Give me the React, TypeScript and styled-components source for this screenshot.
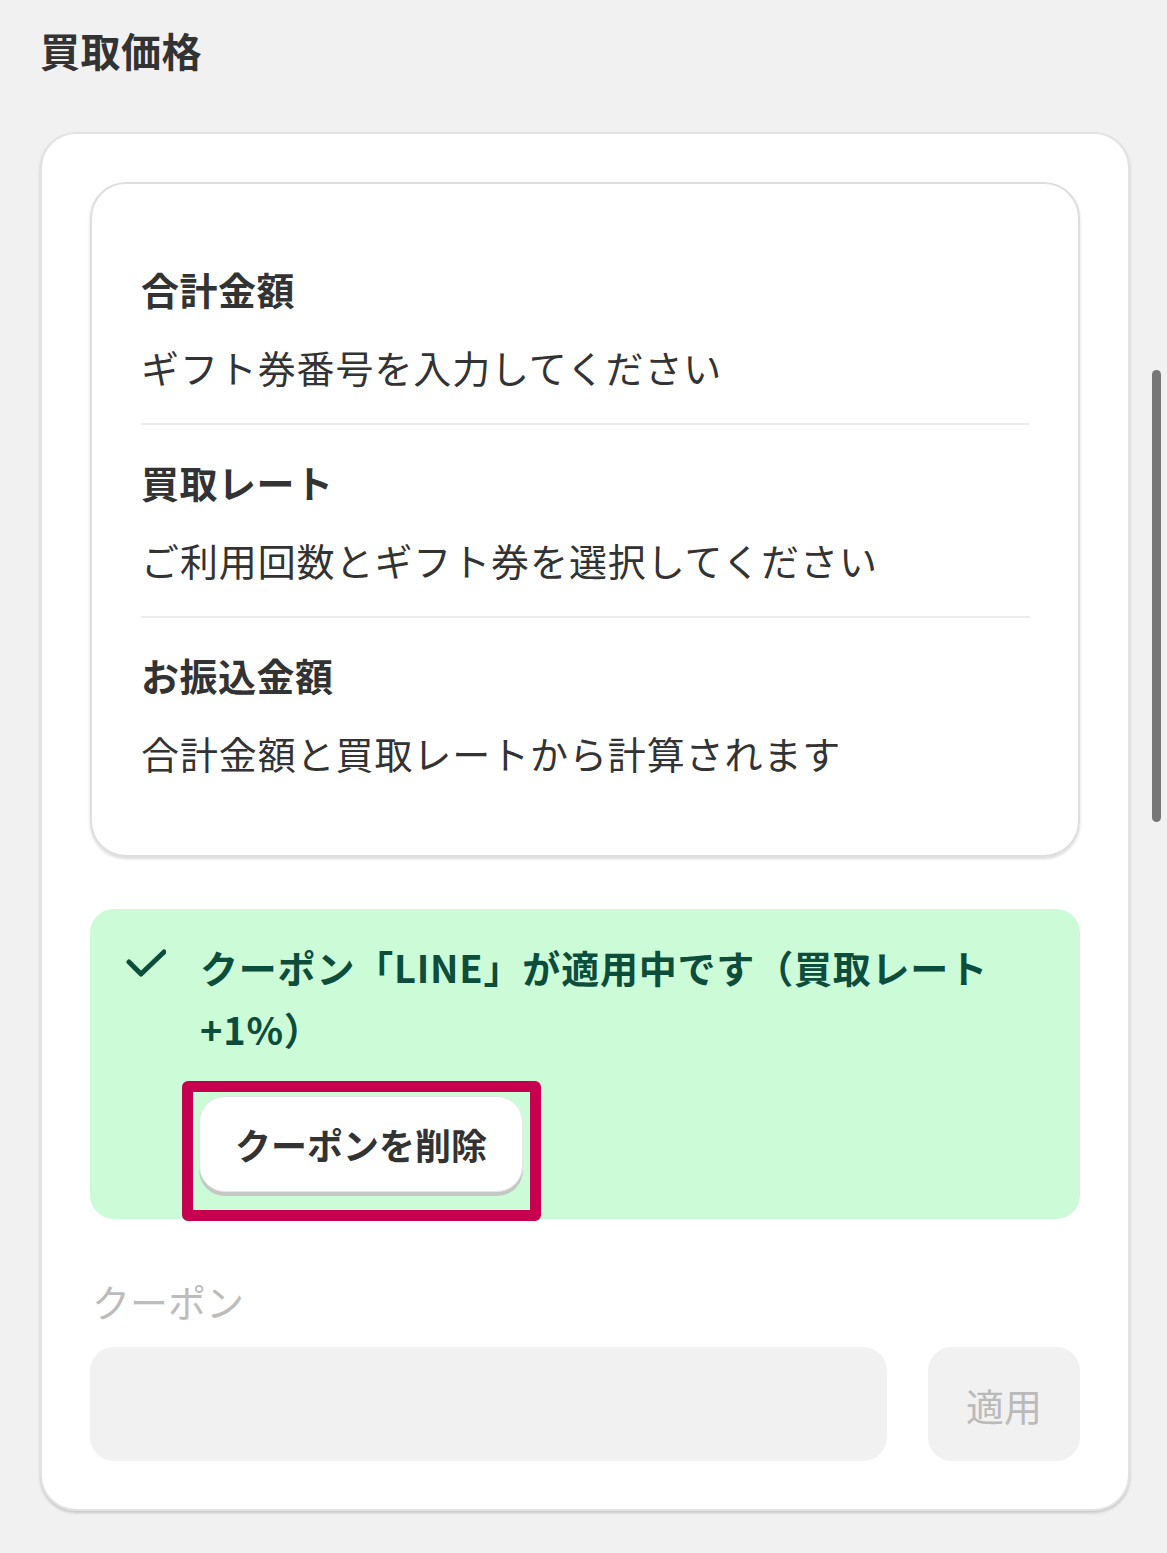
import styled, { createGlobalStyle } from "styled-components";

const rows = [
  { label: "合計金額", text: "ギフト券番号を入力してください" },
  { label: "買取レート", text: "ご利用回数とギフト券を選択してください" },
  { label: "お振込金額", text: "合計金額と買取レートから計算されます" },
];

const App = () => {
  return (
    <Page>
      <GlobalStyle />
      <Title>買取価格</Title>
      <Card>
        <Summary>
          {rows.map((row) => (
            <Row key={row.label}>
              <RowLabel>{row.label}</RowLabel>
              <RowText>{row.text}</RowText>
            </Row>
          ))}
        </Summary>

        <CouponApplied>
          <CheckIcon viewBox="0 0 40 40" aria-hidden="true">
            <polyline points="3,15 15,27 38,5" />
          </CheckIcon>
          <CouponBody>
            <CouponMessage>クーポン「LINE」が適用中です（買取レート+1%）</CouponMessage>
            <RemoveWrap>
              <RemoveButton type="button">クーポンを削除</RemoveButton>
              <Highlight />
            </RemoveWrap>
          </CouponBody>
        </CouponApplied>

        <CouponLabel>クーポン</CouponLabel>
        <CouponForm>
          <CouponInput disabled aria-label="クーポン" />
          <ApplyButton type="button" disabled>
            適用
          </ApplyButton>
        </CouponForm>
      </Card>
      <Scrollbar />
    </Page>
  );
};

const GlobalStyle = createGlobalStyle`
  html, body {
    margin: 0;
    padding: 0;
    background-color: #f1f1f1;
  }
  body {
    font-family: "Noto Sans CJK JP", "Noto Sans", sans-serif;
    color: #333;
    overflow: hidden;
  }
  * {
    box-sizing: border-box;
  }
`;

const Page = styled.main`
  position: relative;
  padding: 20px 37px 41px 40px;
  min-height: 1553px;
`;

const Title = styled.h1`
  margin: 0 0 52px;
  font-size: 40px;
  line-height: 60px;
  font-weight: 700;
  letter-spacing: 0.5px;
  color: #333;
`;

const Card = styled.section`
  background-color: #fff;
  border: 2px solid #e2e2e2;
  border-radius: 36px;
  padding: 48px;
  box-shadow: 0 2px 3px rgba(0, 0, 0, 0.18);
`;

const Summary = styled.div`
  border: 2px solid #dedede;
  border-radius: 36px;
  padding: 48px 48px 46px 49px;
  box-shadow: 0 2px 3px rgba(0, 0, 0, 0.15);
`;

const Row = styled.div`
  display: flex;
  flex-direction: column;
  gap: 21px;
  padding: 28px 0;
  border-bottom: 2px solid #ececec;

  &:last-child {
    border-bottom: none;
  }
`;

const RowLabel = styled.div`
  font-size: 38px;
  line-height: 57px;
  font-weight: 700;
  letter-spacing: 0.5px;
  color: #333;
`;

const RowText = styled.div`
  font-size: 38px;
  line-height: 57px;
  font-weight: 400;
  letter-spacing: 0.9px;
  color: #333;
`;

const CouponApplied = styled.div`
  display: flex;
  align-items: flex-start;
  gap: 34px;
  margin-top: 52px;
  padding: 27px 50px 27px 36px;
  background-color: #ccfcd7;
  border-radius: 24px;
`;

const CheckIcon = styled.svg`
  flex: none;
  width: 40px;
  height: 40px;
  margin-top: 11px;
  fill: none;
  stroke: #0c4d3c;
  stroke-width: 5;
  stroke-linecap: round;
  stroke-linejoin: round;
`;

const CouponBody = styled.div`
  flex: 1;
  display: flex;
  flex-direction: column;
  align-items: flex-start;
`;

const CouponMessage = styled.p`
  margin: 0;
  font-size: 38px;
  line-height: 62px;
  font-weight: 700;
  letter-spacing: 0.8px;
  color: #0c4d3c;
`;

const RemoveWrap = styled.div`
  position: relative;
  margin-top: 36px;
  margin-left: -1px;
`;

const RemoveButton = styled.button`
  width: 324px;
  height: 96px;
  border: 1px solid #e6e6e6;
  border-radius: 26px;
  background-color: #fff;
  box-shadow: 0 4px 0 #c3c8c4;
  font-family: inherit;
  font-size: 36px;
  font-weight: 700;
  color: #333;
  cursor: pointer;
`;

const Highlight = styled.span`
  position: absolute;
  left: -17px;
  top: -15px;
  width: 359px;
  height: 140px;
  border: 11px solid #c5004f;
  border-radius: 6px;
  pointer-events: none;
`;

const CouponLabel = styled.div`
  margin-top: 53px;
  padding-left: 2px;
  font-size: 38px;
  line-height: 57px;
  color: #bcbcbc;
`;

const CouponForm = styled.div`
  display: grid;
  grid-template-columns: 1fr 152px;
  gap: 41px;
  margin-top: 18px;
`;

const CouponInput = styled.input`
  height: 114px;
  border: none;
  border-radius: 24px;
  background-color: #f1f1f1;
  padding: 0 24px;
  font-family: inherit;
  font-size: 38px;
  outline: none;
`;

const ApplyButton = styled.button`
  height: 114px;
  border: none;
  border-radius: 24px;
  background-color: #f1f1f1;
  font-family: inherit;
  font-size: 38px;
  color: #bababa;
`;

const Scrollbar = styled.div`
  position: absolute;
  left: 1152px;
  top: 370px;
  width: 9px;
  height: 452px;
  border-radius: 5px;
  background-color: #777;
`;

export default App;
